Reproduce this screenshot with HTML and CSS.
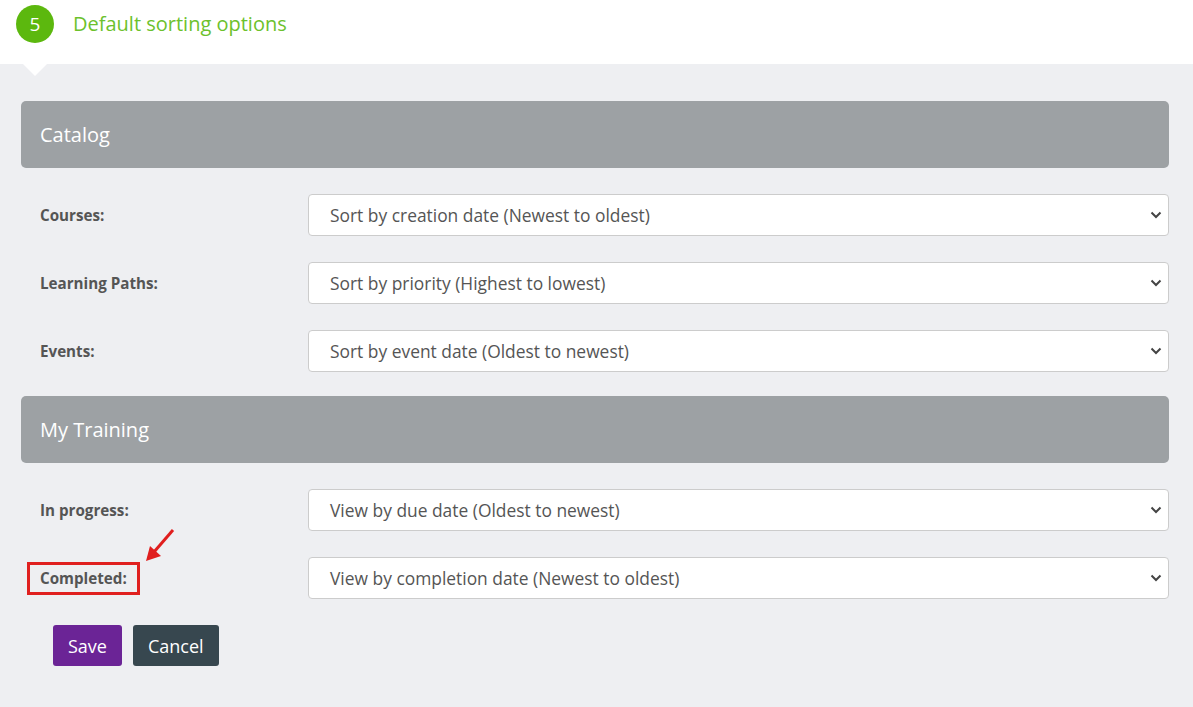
FILE: index.html
```html
<!DOCTYPE html>
<html>
<head>
<meta charset="utf-8">
<link rel="stylesheet" href="styles.css">
</head>
<body>
<header class="step">
  <span class="step-num">5</span>
  <span class="step-title">Default sorting options</span>
  <span class="step-pointer"></span>
</header>
<main class="content">
  <section class="group">
    <h2 class="group-title">Catalog</h2>
    <div class="field">
      <span class="field-label">Courses:</span>
      <div class="select"><span>Sort by creation date (Newest to oldest)</span><svg class="chev" viewBox="0 0 12 8" width="12" height="8"><path d="M1.5 1.5 6 6l4.5-4.5" fill="none" stroke="#444" stroke-width="2"/></svg></div>
    </div>
    <div class="field">
      <span class="field-label">Learning Paths:</span>
      <div class="select"><span>Sort by priority (Highest to lowest)</span><svg class="chev" viewBox="0 0 12 8" width="12" height="8"><path d="M1.5 1.5 6 6l4.5-4.5" fill="none" stroke="#444" stroke-width="2"/></svg></div>
    </div>
    <div class="field">
      <span class="field-label">Events:</span>
      <div class="select"><span>Sort by event date (Oldest to newest)</span><svg class="chev" viewBox="0 0 12 8" width="12" height="8"><path d="M1.5 1.5 6 6l4.5-4.5" fill="none" stroke="#444" stroke-width="2"/></svg></div>
    </div>
  </section>
  <section class="group">
    <h2 class="group-title">My Training</h2>
    <div class="field">
      <span class="field-label">In progress:</span>
      <div class="select"><span>View by due date (Oldest to newest)</span><svg class="chev" viewBox="0 0 12 8" width="12" height="8"><path d="M1.5 1.5 6 6l4.5-4.5" fill="none" stroke="#444" stroke-width="2"/></svg></div>
    </div>
    <div class="field">
      <span class="field-label highlighted">Completed:
        <svg class="annot-arrow" viewBox="0 0 32 36" width="32" height="36"><path d="M29 2 10 24" stroke="#e01e1e" stroke-width="3" fill="none"/><path d="M2 33 6 18 17 28Z" fill="#e01e1e"/></svg>
      </span>
      <div class="select"><span>View by completion date (Newest to oldest)</span><svg class="chev" viewBox="0 0 12 8" width="12" height="8"><path d="M1.5 1.5 6 6l4.5-4.5" fill="none" stroke="#444" stroke-width="2"/></svg></div>
    </div>
  </section>
  <div class="actions">
    <button class="btn btn-save">Save</button>
    <button class="btn btn-cancel">Cancel</button>
  </div>
</main>
</body>
</html>
```

FILE: styles.css
```css
* { box-sizing: border-box; }
html, body { margin: 0; padding: 0; }
body {
  font-family: "Open Sans", "Liberation Sans", sans-serif;
  background: #eeeff2;
  color: #555;
  width: 1193px;
  height: 707px;
  overflow: hidden;
}
.step {
  position: relative;
  background: #fff;
  height: 64px;
  display: flex;
  align-items: center;
  padding-left: 16px;
  padding-bottom: 17px;
}
.step-num {
  width: 38px;
  height: 38px;
  border-radius: 50%;
  background: #5cb80e;
  color: #fff;
  font-size: 19px;
  display: flex;
  align-items: center;
  justify-content: center;
}
.step-title {
  margin-left: 19px;
  color: #6cc12c;
  font-size: 20px;
}
.step-pointer {
  position: absolute;
  left: 23px;
  top: 64px;
  width: 0;
  height: 0;
  border-left: 12px solid transparent;
  border-right: 12px solid transparent;
  border-top: 12px solid #fff;
}
.content {
  padding: 37px 24px 0 21px;
  display: flex;
  flex-direction: column;
  gap: 24px;
}
.group {
  display: flex;
  flex-direction: column;
  gap: 26px;
}
.group-title {
  margin: 0;
  height: 67px;
  background: #9da1a4;
  border-radius: 5px;
  color: #fff;
  font-weight: 400;
  font-size: 20px;
  display: flex;
  align-items: center;
  padding-left: 19px;
}
.field {
  display: grid;
  grid-template-columns: 287px 1fr;
  align-items: center;
}
.field-label {
  position: relative;
  justify-self: start;
  padding-left: 19px;
  font-size: 15.2px;
  font-weight: 700;
  color: #555;
}
.field-label.highlighted {
  margin-left: 6px;
  padding: 3px 10px 4px;
  border: 3px solid #e0201f;
}
.annot-arrow {
  position: absolute;
  left: 114px;
  top: -37px;
}
.select {
  height: 42px;
  background: #fff;
  border: 1px solid #ccc;
  border-radius: 4px;
  display: flex;
  align-items: center;
  justify-content: space-between;
  padding: 0 6px 0 21px;
  font-size: 17.4px;
  color: #555;
}
.actions {
  display: flex;
  gap: 11px;
  padding-left: 32px;
  margin-top: 2px;
}
.btn {
  font-family: "Open Sans", "Liberation Sans", sans-serif;
  font-size: 18px;
  color: #fff;
  border: 0;
  border-radius: 3px;
  height: 41px;
  padding: 0 15px;
}
.btn-save { background: #6b2496; }
.btn-cancel { background: #37474f; }
```
